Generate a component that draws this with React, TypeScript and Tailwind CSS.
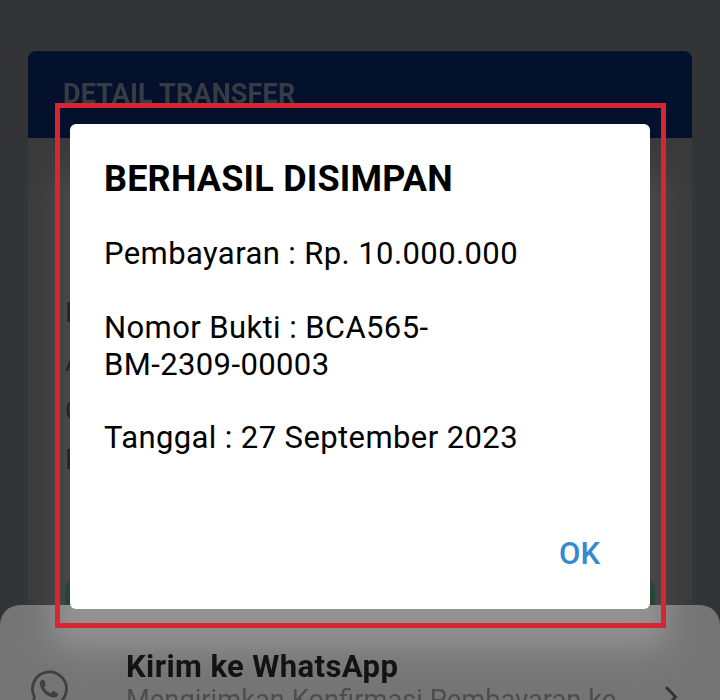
const labels = ["N", "A", "C", "N"];

function TransferCard() {
  return (
    <section className="h-[650px] overflow-hidden rounded-t-[8px] bg-[#3a3a3a]">
      <header className="flex h-[87px] items-center bg-[#04112c] pl-[35px]">
        <h1 className="relative -top-px text-[27px] leading-[34px] font-bold tracking-[0.15px] text-[#373b43]">DETAIL TRANSFER</h1>
      </header>
      <ul className="flex flex-col px-[37px] pt-[150px]">
        {labels.map((label, index) => (
          <li key={index} className="h-[49px] text-[28px] leading-[49px] text-[#1d1d1d]">{label}</li>
        ))}
      </ul>
      <div className="mx-[37px] mt-[97px] h-[60px] rounded-[8px] bg-[#1f3a2a]" />
    </section>
  );
}

function ShareSheet() {
  return (
    <section className="absolute inset-x-0 top-[605px] flex h-[140px] items-start rounded-t-[20px] bg-[#757575]">
      <svg className="mt-[65px] ml-[30px] h-[38px] w-[38px] shrink-0 text-[#404040]" viewBox="0 0 38 38" fill="none">
        <path d="M2 36l2.500-9A17 17 0 1 1 11 33.700Z" stroke="currentColor" strokeWidth="2.8" />
        <path
          d="M14.600 11.200c-.5-1.200-1.500-1.600-2.700-1.200-1.600.6-2.300 2.300-2 4.300 1.100 6.900 7.100 12.500 13.700 13.200 2.300.2 4.100-1 4.400-2.700.2-1-.2-1.500-1.100-2l-2.900-1.500c-.8-.4-1.400-.2-1.900.4l-1.300 1.500c-2.900-1-5.200-3-6.700-5.700l1.200-1.800c.3-.5.3-1 .1-1.500Z"
          fill="currentColor"
        />
      </svg>
      <div className="mt-[44px] ml-[58px] w-[520px] whitespace-nowrap">
        <h2 className="text-[31px] leading-[36px] font-bold tracking-[0.4px] text-[#121212]">Kirim ke WhatsApp</h2>
        <p className="text-[27.3px] leading-[30px] text-[#4d4d4d]">Mengirimkan Konfirmasi Pembayaran ke</p>
      </div>
      <svg className="mt-[79px] ml-[18px] h-[26px] w-[16px] shrink-0" viewBox="0 0 16 26" fill="none">
        <path d="M3 4l8.500 9-8.500 9" stroke="#353535" strokeWidth="3" strokeLinecap="round" />
      </svg>
    </section>
  );
}

function SavedDialog() {
  return (
    <section className="absolute top-[124px] left-[70px] flex h-[485px] w-[580px] flex-col rounded-[6px] bg-white pt-[33px] pr-[50px] pb-[36px] pl-[34px] text-black">
      <h2 className="text-[36px] leading-[44px] font-bold tracking-[0.2px]">BERHASIL DISIMPAN</h2>
      <div className="mt-[34px] flex flex-col gap-[37px] text-[31px] leading-[37px] tracking-[0.4px] whitespace-nowrap">
        <p>Pembayaran : Rp. 10.000.000</p>
        <p>Nomor Bukti : BCA565-<br />BM-2309-00003</p>
        <p className="-mt-px">Tanggal : 27 September 2023</p>
      </div>
      <button className="mt-auto self-end text-[31px] leading-[38px] font-medium text-[#328ad0]">OK</button>
    </section>
  );
}

export default function App() {
  return (
    <main className="relative h-[700px] w-[720px] overflow-hidden bg-[#333436] px-[28px] pt-[51px] font-[Roboto,sans-serif]">
      <TransferCard />
      <ShareSheet />
      <div className="absolute top-[170px] left-[52px] h-[478px] w-[616px] rounded-[16px] bg-[#333333] mix-blend-color-dodge blur-[16px]" />
      <SavedDialog />
      <div className="absolute top-[103px] left-[55px] h-[525px] w-[611px] border-[5px] border-[#d7262f]" />
    </main>
  );
}
